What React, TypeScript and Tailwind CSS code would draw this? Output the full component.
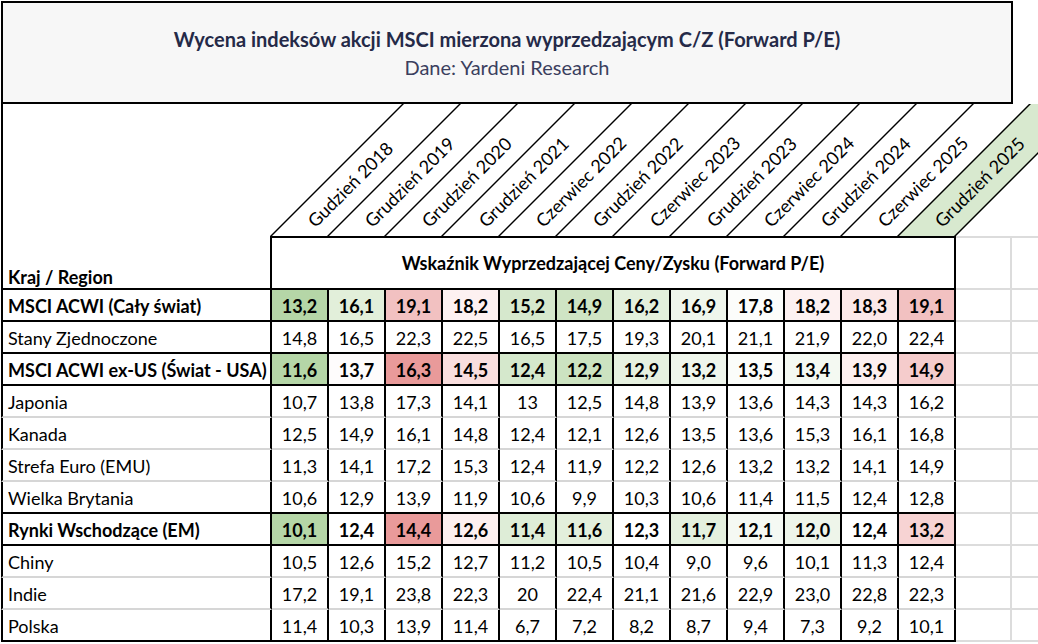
const headers = [
  "Gudzień 2018",
  "Grudzień 2019",
  "Grudzień 2020",
  "Grudzień 2021",
  "Czerwiec 2022",
  "Grudzień 2022",
  "Czerwiec 2023",
  "Grudzień 2023",
  "Czerwiec 2024",
  "Grudzień 2024",
  "Czerwiec 2025",
  "Grudzień 2025",
];

type Row = {
  name: string;
  bold?: boolean;
  values: string[];
  fills?: string[];
};

const rows: Row[] = [
  {
    name: "MSCI ACWI (Cały świat)",
    bold: true,
    values: ["13,2", "16,1", "19,1", "18,2", "15,2", "14,9", "16,2", "16,9", "17,8", "18,2", "18,3", "19,1"],
    fills: [
      "bg-[#b5d6a7]",
      "bg-[#e2efda]",
      "bg-[#f2c1c1]",
      "bg-[#fdf1f1]",
      "bg-[#d6e8cd]",
      "bg-[#cfe4c4]",
      "bg-[#e3f0dc]",
      "bg-[#eff6ec]",
      "bg-[#fcfdfb]",
      "bg-[#fdf1f1]",
      "bg-[#fbe8e8]",
      "bg-[#f2c1c1]",
    ],
  },
  {
    name: "Stany Zjednoczone",
    values: ["14,8", "16,5", "22,3", "22,5", "16,5", "17,5", "19,3", "20,1", "21,1", "21,9", "22,0", "22,4"],
  },
  {
    name: "MSCI ACWI ex-US (Świat - USA)",
    bold: true,
    values: ["11,6", "13,7", "16,3", "14,5", "12,4", "12,2", "12,9", "13,2", "13,5", "13,4", "13,9", "14,9"],
    fills: [
      "bg-[#b5d6a7]",
      "bg-[#fefcfc]",
      "bg-[#e99a9a]",
      "bg-[#f9dede]",
      "bg-[#d5e8cc]",
      "bg-[#cce3c1]",
      "bg-[#e6f1e0]",
      "bg-[#eff6ec]",
      "bg-[#fbfdfa]",
      "bg-[#f4f9f2]",
      "bg-[#fdf0f0]",
      "bg-[#f5cccc]",
    ],
  },
  {
    name: "Japonia",
    values: ["10,7", "13,8", "17,3", "14,1", "13", "12,5", "14,8", "13,9", "13,6", "14,3", "14,3", "16,2"],
  },
  {
    name: "Kanada",
    values: ["12,5", "14,9", "16,1", "14,8", "12,4", "12,1", "12,6", "13,5", "13,6", "15,3", "16,1", "16,8"],
  },
  {
    name: "Strefa Euro (EMU)",
    values: ["11,3", "14,1", "17,2", "15,3", "12,4", "11,9", "12,2", "12,6", "13,2", "13,2", "14,1", "14,9"],
  },
  {
    name: "Wielka Brytania",
    values: ["10,6", "12,9", "13,9", "11,9", "10,6", "9,9", "10,3", "10,6", "11,4", "11,5", "12,4", "12,8"],
  },
  {
    name: "Rynki Wschodzące (EM)",
    bold: true,
    values: ["10,1", "12,4", "14,4", "12,6", "11,4", "11,6", "12,3", "11,7", "12,1", "12,0", "12,4", "13,2"],
    fills: [
      "bg-[#b5d6a7]",
      "bg-white",
      "bg-[#e99a9a]",
      "bg-[#fdf0f0]",
      "bg-[#deedd7]",
      "bg-[#e3efdc]",
      "bg-white",
      "bg-[#e4f0de]",
      "bg-[#f5f9f3]",
      "bg-[#eef5ea]",
      "bg-white",
      "bg-[#f7d3d3]",
    ],
  },
  {
    name: "Chiny",
    values: ["10,5", "12,6", "15,2", "12,7", "11,2", "10,5", "10,4", "9,0", "9,6", "10,1", "11,3", "12,4"],
  },
  {
    name: "Indie",
    values: ["17,2", "19,1", "23,8", "22,3", "20", "22,4", "21,1", "21,6", "22,9", "23,0", "22,8", "22,3"],
  },
  {
    name: "Polska",
    values: ["11,4", "10,3", "13,9", "11,4", "6,7", "7,2", "8,2", "8,7", "9,4", "7,3", "9,2", "10,1"],
  },
];

function DiagonalHeader({ label, index }: { label: string; index: number }) {
  const last = index === headers.length - 1;
  return (
    <div className="relative w-[57px] h-[132px] shrink-0">
      <div
        className={
          last
            ? "absolute left-0 bottom-0 w-[59px] h-[132px] border-x-2 border-black bg-[#d8e9cf] origin-bottom-left [transform:skewX(-45deg)]"
            : "absolute left-0 bottom-0 w-[57px] h-[132px] border-l-2 border-black origin-bottom-left [transform:skewX(-45deg)]"
        }
      />
      <span className="absolute left-[47px] bottom-[6px] whitespace-nowrap leading-none origin-bottom-left [transform:rotate(-45deg)]">
        {label}
      </span>
    </div>
  );
}

function DataRow({ row, index }: { row: Row; index: number }) {
  const next = rows[index + 1];
  const dark = row.bold || !next || next.bold;
  const line = dark ? "border-b-black" : "border-b-[#d6d6d6]";
  return (
    <div className="flex h-[32px]">
      <div
        className={`w-[271px] shrink-0 flex items-center pl-[5px] pt-[2px] border-l-2 border-r-2 border-b-2 border-l-black border-r-black ${line} ${
          row.bold ? "font-bold" : ""
        }`}
      >
        {row.name}
      </div>
      {row.values.map((v, i) => (
        <div
          key={i}
          className={`w-[57px] shrink-0 flex items-center justify-center pt-[2px] border-r-2 border-b-2 border-r-black ${line} ${
            row.fills ? row.fills[i] : ""
          } ${row.bold ? "font-bold" : ""}`}
        >
          {v}
        </div>
      ))}
      <div className="w-[56px] shrink-0 border-r-2 border-b-2 border-[#dcdcdc]" />
      <div className="flex-1 border-b-2 border-[#dcdcdc]" />
    </div>
  );
}

export default function App() {
  return (
    <div className="w-[1038px] h-[644px] overflow-hidden bg-white pl-px text-black text-[18px] font-['Lato','Open_Sans',sans-serif]">
      <div className="mt-px w-[1012px] h-[103px] border-2 border-black bg-[#f7f7f7] flex flex-col items-center justify-center pt-px text-[20px]">
        <div className="font-bold leading-[28px] text-[#252a48]">
          Wycena indeksów akcji MSCI mierzona wyprzedzającym C/Z (Forward P/E)
        </div>
        <div className="leading-[28px] text-[#3b3f5e]">Dane: Yardeni Research</div>
      </div>

      <div className="flex">
        <div className="w-[269px] h-[186px] shrink-0 border-l-2 border-b-2 border-black flex items-end pl-[5px] pb-px leading-[20px] font-bold">
          Kraj / Region
        </div>
        <div className="flex-1 flex flex-col">
          <div className="flex h-[132px]">
            {headers.map((h, i) => (
              <DiagonalHeader key={h} label={h} index={i} />
            ))}
          </div>
          <div className="flex h-[54px]">
            <div className="w-[686px] shrink-0 border-2 border-black flex items-center justify-center font-bold">
              Wskaźnik Wyprzedzającej Ceny/Zysku (Forward P/E)
            </div>
            <div className="w-[56px] shrink-0 border-y-2 border-r-2 border-[#dcdcdc]" />
            <div className="flex-1 border-y-2 border-[#dcdcdc]" />
          </div>
        </div>
      </div>

      {rows.map((r, i) => (
        <DataRow key={r.name} row={r} index={i} />
      ))}
    </div>
  );
}
